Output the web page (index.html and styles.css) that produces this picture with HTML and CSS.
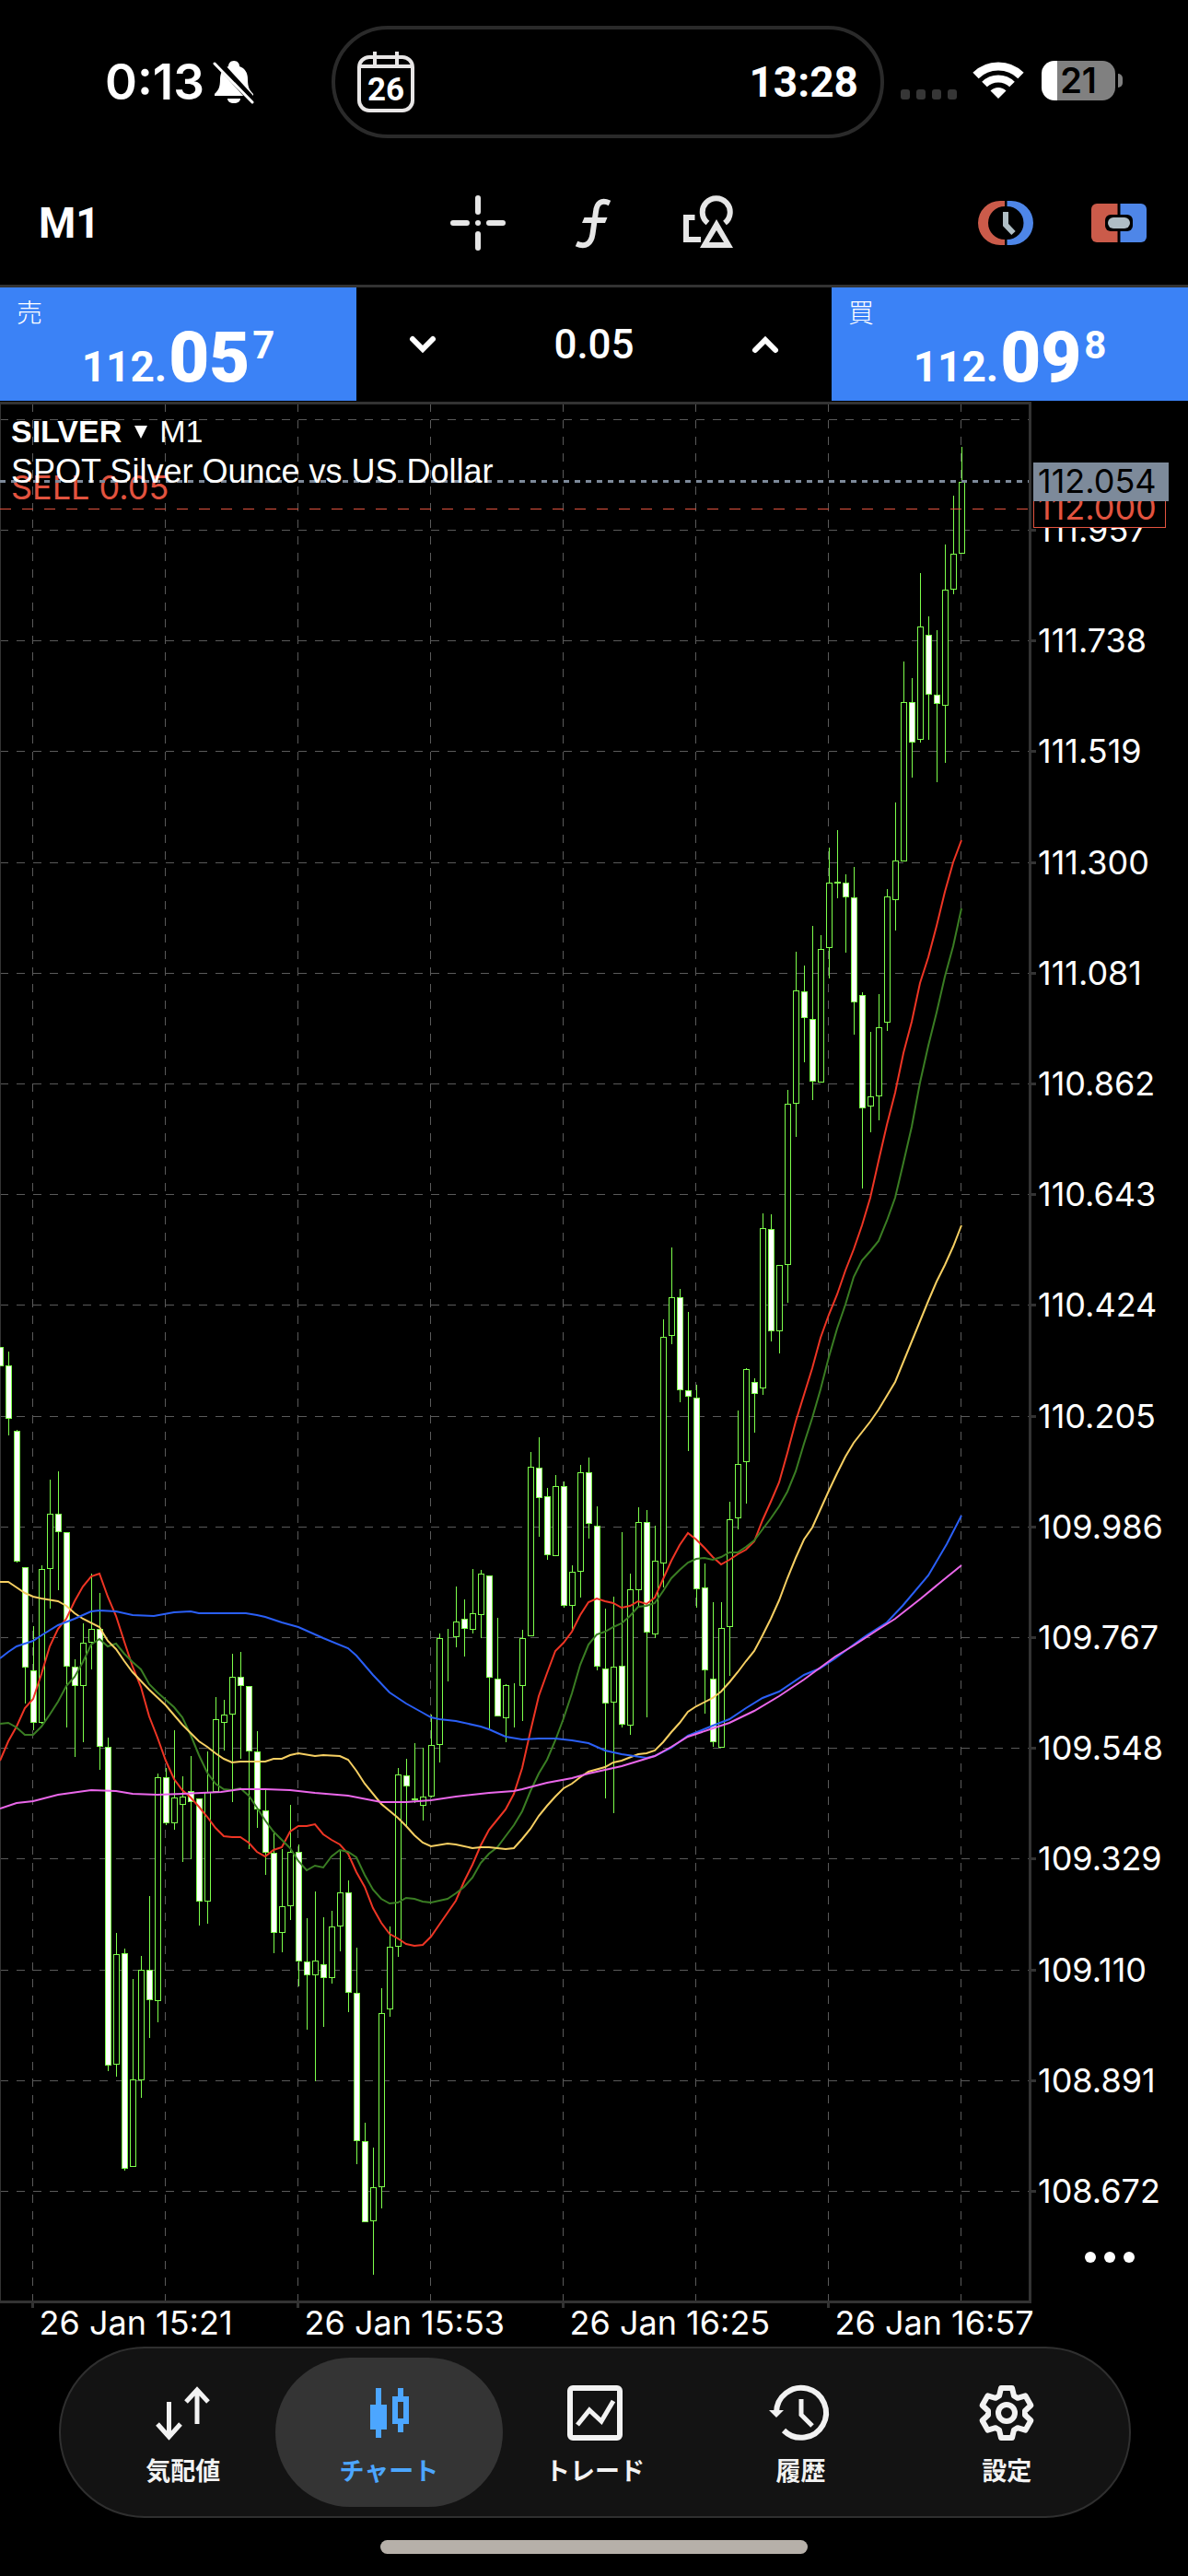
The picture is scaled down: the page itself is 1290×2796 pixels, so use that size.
FILE: index.html
```html
<!doctype html>
<html lang="ja">
<head>
  <meta charset="UTF-8">
  <meta name="viewport" content="width=device-width">
  <title>SILVER M1</title>
  <link rel="stylesheet" href="styles.css">
</head>
<body>
  <div class="status">
    <div class="status-left">
      <span class="clock">0:13</span>
      <svg class="bell" viewBox="0 0 44 48">
        <path d="M22 1c4 0 6 3 6 6 6 2 9 7 9 14 0 9 2 12 6 16v2H1v-2c4-4 6-7 6-16 0-7 3-12 9-14 0-3 2-6 6-6z" fill="#fff"/>
        <path d="M15 42h14c0 3-3 5-7 5s-7-2-7-5z" fill="#fff"/>
        <path d="M2 0L44 46" stroke="#000" stroke-width="8"/>
        <path d="M1 4L42 46" stroke="#fff" stroke-width="3" stroke-linecap="round"/>
      </svg>
    </div>
    <div class="island">
      <svg class="calendar" viewBox="0 0 62 68">
        <rect x="2" y="7" width="58" height="58" rx="11" fill="none" stroke="#e8e6e6" stroke-width="4"/>
        <path d="M3 17H59M19 1V15M43 1V15" stroke="#e8e6e6" stroke-width="4" fill="none"/>
        <text x="31" y="54" text-anchor="middle">26</text>
      </svg>
      <span class="timer">13:28</span>
    </div>
    <div class="status-right">
      <span class="signal"><i></i><i></i><i></i><i></i></span>
      <svg class="wifi" viewBox="0 0 54 41">
        <path d="M2.500 15A35 35 0 0 1 51.500 15" stroke="#fff" stroke-width="9" fill="none"/>
        <path d="M12 24.500A21.500 21.500 0 0 1 42 24.500" stroke="#fff" stroke-width="8" fill="none"/>
        <path d="M27 40L18.500 31.500A12 12 0 0 1 35.500 31.500z" fill="#fff"/>
      </svg>
      <span class="battery">21</span>
    </div>
  </div>

  <div class="toolbar">
    <button class="period">M1</button>
    <div class="tools">
      <button aria-label="十字線">
        <svg viewBox="0 0 60 60"><path d="M3 30H18M42 30H57M30 3V18M30 42V57M30 30h.01" stroke="#e6e6e6" stroke-width="6" stroke-linecap="round"/></svg>
      </button>
      <button aria-label="インディケータ">
        <svg viewBox="0 0 60 60">
          <path d="M48 8.500C39 4.500 34 8 33 18L29.500 42C28 52 22 57 12 52.500" stroke="#e6e6e6" stroke-width="6" fill="none"/>
          <path d="M20.500 24H45.500L43 30H18z" fill="#e6e6e6"/>
        </svg>
      </button>
      <button aria-label="オブジェクト">
        <svg viewBox="0 0 60 60">
          <path d="M15.500 24H6V48H22M29.500 30A15 15 0 1 1 48 30" stroke="#e6e6e6" stroke-width="6" fill="none"/>
          <path d="M39 26L57 57H21zM39 38L31 51H47z" fill="#e6e6e6" fill-rule="evenodd"/>
        </svg>
      </button>
    </div>
    <div class="tools tools-right">
      <button aria-label="注文">
        <svg viewBox="0 0 60 60">
          <path d="M29 6H24A24 24 0 0 0 24 54H29V48A18 18 0 0 1 29 12z" fill="#cb5b4a"/>
          <path d="M31.500 6H36A24 24 0 0 1 36 54H31.500V48A18 18 0 0 0 31.500 12z" fill="#4e86e8"/>
          <path d="M30 18V32L38.500 41" stroke="#b0bec5" stroke-width="6" fill="none"/>
        </svg>
      </button>
      <button aria-label="ワンクリック">
        <svg viewBox="0 0 60 60">
          <path d="M28.500 9H6a6 6 0 0 0-6 6V45a6 6 0 0 0 6 6H28.500z" fill="#cb5b4a"/>
          <path d="M31.500 9H54a6 6 0 0 1 6 6V45a6 6 0 0 1-6 6H31.500z" fill="#4e86e8"/>
          <rect x="15" y="21" width="30" height="18" rx="6" fill="#000"/>
          <rect x="18" y="24" width="24" height="12" rx="6" fill="#b0bec5"/>
        </svg>
      </button>
    </div>
  </div>

  <div class="trade">
    <button class="quote">
      <span class="side">売</span>
      <span class="price">112.<b>05</b><sup>7</sup></span>
    </button>
    <div class="volume">
      <button aria-label="減らす"><svg viewBox="0 0 28 18"><path d="M3 3L14 14L25 3"/></svg></button>
      <input type="text" value="0.05" aria-label="数量">
      <button aria-label="増やす"><svg viewBox="0 0 28 18"><path d="M3 15L14 4L25 15"/></svg></button>
    </div>
    <button class="quote">
      <span class="side">買</span>
      <span class="price">112.<b>09</b><sup>8</sup></span>
    </button>
  </div>

  <div class="chart">
    <svg id="chart" viewBox="0 436 1290 2108"></svg>
    <div class="chart-title">
      <button><b>SILVER</b> <i></i> M1</button>
      <p>SPOT Silver Ounce vs US Dollar</p>
    </div>
    <button class="more" aria-label="その他"><i></i><i></i><i></i></button>
  </div>

  <nav class="tabs">
    <a href="#quotes">
      <svg viewBox="0 0 60 60"><path d="M14.500 18V55M2 42L14.500 56L27 42M45 42V5M33 18L45 5L57 18" stroke="currentColor" stroke-width="5" fill="none"/></svg>
      <span>気配値</span>
    </a>
    <a href="#chart" class="on">
      <svg viewBox="0 0 60 60"><path d="M16 3h6v18h6v27h-6v9h-6v-9h-6V21h6zM40 3h6v9h6v30h-6v9h-6v-9h-6V12h6zM40 18v18h6V18z" fill="currentColor" fill-rule="evenodd"/></svg>
      <span>チャート</span>
    </a>
    <a href="#trade">
      <svg viewBox="0 0 60 60">
        <rect x="3" y="3" width="54" height="54" rx="3" stroke="currentColor" stroke-width="6" fill="none"/>
        <path d="M11 43L24 27L37 39L50 17" stroke="currentColor" stroke-width="5" fill="none"/>
      </svg>
      <span>トレード</span>
    </a>
    <a href="#history">
      <svg viewBox="0 0 60 60">
        <path d="M3 30A27 27 0 1 1 11 49" stroke="currentColor" stroke-width="6" fill="none"/>
        <path d="M-5 27H11L3 35z" fill="currentColor"/>
        <path d="M30 15V32L42 44" stroke="currentColor" stroke-width="5" fill="none"/>
      </svg>
      <span>履歴</span>
    </a>
    <a href="#settings">
      <svg viewBox="-30 -30 60 60">
        <path d="M-8-18.500L-6-27L6-27L8-18.500L12-16.200L20.400-18.700L26.400-8.300L20-2.300L20 2.300L26.400 8.300L20.400 18.700L12 16.200L8 18.500L6 27L-6 27L-8 18.500L-12 16.200L-20.400 18.700L-26.400 8.300L-20 2.300L-20-2.300L-26.400-8.300L-20.400-18.700L-12-16.200z" stroke="currentColor" stroke-width="6" stroke-linejoin="round" fill="none"/>
        <circle r="9" stroke="currentColor" stroke-width="6" fill="none"/>
      </svg>
      <span>設定</span>
    </a>
  </nav>
  <div class="home-bar"></div>
  <script src="chart.js"></script>
</body>
</html>
```
FILE: styles.css
```css
*{margin:0;
  padding:0;
  box-sizing:border-box;}
body{background:#000;
     color:#fff;
     font-family:Inter,"Noto Sans CJK JP",sans-serif;}
button,input{background:none;
             border:0;
             color:inherit;
             font:inherit;}
button{cursor:pointer;}
svg{display:block;overflow:visible;}
i{font-style:normal;}

/* status bar */
.status{display:grid;
        grid-template-columns:36fr 60fr 33fr;
        height:150px;
        padding-top:28px;}
.status-left{display:flex;
             align-items:center;
             padding:0 0 1px 114px;}
.clock{font-size:53px;
       font-weight:600;}
.bell{width:44px;
      height:48px;
      margin-left:10px;}
.island{display:flex;
        align-items:center;
        justify-content:space-between;
        height:122px;
        padding:0 24px;
        border:4px solid #2a2a2a;
        border-radius:61px;}
.calendar{width:62px;height:68px;}
.calendar text{fill:#fff;
               font:bold 35px Roboto,sans-serif;}
.timer{font:bold 46px Roboto,sans-serif;}
.status-right{display:flex;
              align-items:center;
              padding:0 0 4px 18px;}
.signal{display:flex;
        gap:7px;
        padding-top:30px;}
.signal i{width:10px;
          height:11px;
          border-radius:3px;
          background:#363636;}
.wifi{width:54px;
      height:41px;
      margin:0 20px 0 18px;}
.battery{position:relative;
         width:80px;
         height:43px;
         border-radius:14px;
         background:linear-gradient(90deg,#fff 17px,#808080 17px);
         color:#000;
         font-size:38px;
         font-weight:600;
         line-height:43px;
         text-align:center;}
.battery:after{content:"";
               position:absolute;
               right:-8px;
               top:14px;
               width:5px;
               height:15px;
               border-radius:0 8px 8px 0;
               background:#808080;}

/* toolbar */
.toolbar{display:grid;
         grid-template-columns:1fr auto 1fr;
         align-items:center;
         height:162px;
         padding:24px 45px 0 42px;
         border-bottom:3px solid #333;}
.period{justify-self:start;
        font:bold 46px Roboto,sans-serif;}
.tools{display:flex;gap:65px;}
.tools-right{justify-self:end;gap:63px;}
.tools svg{width:60px;height:60px;}

/* one click trading */
.trade{display:grid;
       grid-template-columns:3fr 4fr 3fr;
       grid-template-rows:123px;
       padding-bottom:1px;}
.quote{display:flex;
       flex-direction:column;
       align-items:center;
       background:#3b82f6;}
.side{align-self:flex-start;
      height:36px;
      padding:8px 18px 0;
      font:300 28px/36px "Noto Sans CJK JP",sans-serif;}
.price{display:flex;
       align-items:baseline;
       height:80px;
       font:bold 46px/80px Roboto,sans-serif;}
.price b{font-size:76px;
         margin-left:2px;}
.price sup{align-self:flex-start;
           margin-left:3px;
           font-size:42px;
           line-height:54px;}
.volume{display:flex;
        align-items:center;
        justify-content:space-between;
        padding:0 58px;}
.volume input{width:200px;
              text-align:center;
              font:500 44px Roboto,sans-serif;}
.volume svg{width:28px;height:18px;}
.volume path{fill:none;
             stroke:#fff;
             stroke-width:6;
             stroke-linecap:round;}

/* chart */
.chart{position:relative;}
.chart-title{position:absolute;
             left:12px;
             top:10px;
             font:36px/44px "Liberation Sans",Arial,sans-serif;}
.chart-title button{display:block;
                    font-size:34px;}
.chart-title i{display:inline-block;
               margin:0 4px;
               border:7px solid transparent;
               border-top:14px solid #fff;
               border-bottom:0;
               vertical-align:4px;}
.more{position:absolute;
      right:58px;
      bottom:88px;
      display:flex;
      gap:9px;}
.more i{width:12px;
        height:12px;
        border-radius:50%;
        background:#fff;}
.frame{fill:#333;}
.grid{stroke:#5a5a5a;
      shape-rendering:crispEdges;}
.grid-x{stroke-dasharray:9 9;}
.label{fill:#fff;
       font:36px Inter,sans-serif;}
.candles{fill:#000;
         stroke:#7dff4b;
         shape-rendering:crispEdges;}
.candles .down{fill:#fff;}
.ma{fill:none;
    stroke-width:2;}
.bid-line{stroke:#7d8a9a;
          stroke-width:3;
          stroke-dasharray:6 6;}
.order-line{stroke:#e2533f;
            stroke-dasharray:12 12;
            shape-rendering:crispEdges;}
.order-box{fill:#000;
           stroke:#e2533f;}
.order-text{fill:#e2533f;}
.bid-box{fill:#7d8a9a;}
.bid-text{fill:#000;}

/* bottom tabs */
.tabs{display:flex;
      margin:3px 62px 0 64px;
      padding:10px 21px;
      border:2px solid #2f2f2f;
      border-radius:93px;
      background:#131313;}
.tabs a{position:relative;
        z-index:1;
        flex:1;
        display:flex;
        flex-direction:column;
        align-items:center;
        gap:12px;
        height:162px;
        padding-top:30px;
        color:#f2f2f2;
        font:bold 27px/40px "Noto Sans CJK JP",sans-serif;
        text-decoration:none;}
.tabs .on{color:#4ca6ff;}
.tabs .on:before{content:"";
                 position:absolute;
                 z-index:-1;
                 top:0;
                 bottom:0;
                 left:-12px;
                 right:-12px;
                 border-radius:81px;
                 background:#343434;}
.tabs svg{width:60px;height:60px;}
.home-bar{width:36%;
          height:15px;
          margin:24px auto;
          border-radius:8px;
          background:#b6b0a9;}
```
FILE: chart.js
```js
window.onload=function(){
  var svg=document.getElementById('chart'),
      step=9,
      // high, body top, body bottom, low, 1 = falling
      candles=[
        [1467,1482,1540,1558,1],[1552,1553,1695,1696,1],[1701,1701,1810,1849,1],[1765,1813,1870,1878,1],
        [1699,1703,1870,1871,0],[1606,1643,1703,1746,0],[1597,1643,1663,1726,1],[1663,1663,1809,1875,1],
        [1801,1809,1830,1907,1],[1762,1783,1830,1891,0],[1708,1768,1783,1812,0],[1729,1768,1896,1921,1],
        [1886,1896,2242,2248,1],[2098,2121,2241,2254,0],[2115,2120,2354,2356,1],[2148,2257,2352,2352,0],
        [2123,2138,2258,2277,0],[2058,2138,2171,2212,1],[1925,1929,2172,2195,0],[1919,1929,1979,1981,1],
        [1878,1951,1979,1986,0],[1928,1950,1959,2021,0],[1906,1944,1956,2018,1],[1952,1952,2064,2090,1],
        [1901,1945,2064,2088,0],[1842,1866,1945,1945,0],[1845,1861,1870,1900,0],[1795,1820,1861,1956,0],
        [1793,1820,1830,1909,1],[1830,1830,1901,2007,1],[1879,1901,1964,1984,1],[1943,1965,2011,2035,1],
        [1990,2011,2098,2120,1],[2007,2069,2098,2119,0],[1959,2010,2069,2084,0],[2002,2010,2129,2156,1],
        [2082,2129,2144,2203,1],[2053,2128,2144,2259,0],[2081,2132,2147,2200,1],[2074,2091,2147,2153,0],
        [2009,2054,2091,2118,0],[2041,2054,2163,2184,1],[2114,2163,2324,2349,1],[2304,2324,2412,2412,1],
        [2331,2374,2411,2469,0],[2158,2185,2374,2397,0],[2091,2113,2181,2189,0],[1919,1926,2113,2124,0],
        [1909,1927,1939,1983,1],[1892,1952,1954,1957,1],[1897,1950,1960,1976,0],[1861,1894,1950,1951,0],
        [1773,1778,1894,1913,0],[1768,1777,1777,1825,0],[1722,1760,1777,1788,0],[1736,1757,1768,1798,1],
        [1703,1751,1769,1773,0],[1704,1708,1753,1778,0],[1710,1710,1821,1876,1],[1756,1822,1863,1863,1],
        [1828,1829,1865,1891,0],[1827,1829,1829,1875,0],[1769,1778,1830,1868,0],[1576,1592,1776,1776,0],
        [1560,1593,1626,1668,1],[1615,1624,1688,1693,1],[1601,1613,1689,1689,0],[1608,1613,1743,1745,1],
        [1699,1706,1743,1769,0],[1590,1598,1706,1734,0],[1582,1598,1654,1670,1],[1635,1656,1809,1813,1],
        [1746,1811,1849,1952,1],[1733,1809,1848,1968,0],[1663,1808,1872,1875,1],[1708,1725,1873,1883,0],
        [1636,1652,1726,1744,0],[1639,1652,1772,1864,1],[1656,1694,1774,1778,0],[1432,1451,1697,1723,0],
        [1354,1408,1450,1459,0],[1399,1408,1509,1522,1],[1424,1509,1516,1575,1],[1503,1517,1725,1745,1],
        [1697,1723,1813,1860,1],[1739,1822,1891,1896,1],[1739,1767,1897,1897,0],[1630,1649,1766,1819,0],
        [1531,1589,1648,1660,0],[1485,1486,1587,1632,0],[1496,1500,1513,1555,1],[1317,1333,1507,1514,0],
        [1318,1334,1445,1456,1],[1373,1373,1445,1469,0],[1183,1198,1373,1414,0],[1033,1075,1198,1234,0],
        [1048,1076,1105,1153,1],[1005,1106,1174,1194,1],[1015,1030,1175,1175,0],[920,958,1029,1062,0],
        [901,957,959,975,0],[949,958,974,1034,1],[941,974,1088,1123,1],[1077,1080,1203,1290,1],
        [1120,1190,1201,1229,0],[1079,1115,1190,1216,0],[965,973,1110,1119,0],[871,934,977,1010,0],
        [718,762,935,935,0],[736,762,806,844,1],[622,680,803,806,0],[669,689,754,803,1],
        [684,754,764,849,1],[591,640,766,828,0],[538,601,640,645,0],[485,523,601,601,0]
      ],
      // one value for each bar
      fast=[1911,1890,1874,1854,1844,1817,1787,1768,1757,1738,1722,1711,1708,1733,1754,1782,1809,1831,1863,1886,
        1911,1931,1943,1951,1961,1972,1984,1993,1994,1994,2000,2010,2015,2008,2005,1988,1982,1982,1980,1991,
        1997,2002,2012,2032,2048,2071,2087,2099,2104,2110,2112,2111,2102,2089,2076,2063,2042,2024,2003,1986,
        1975,1964,1947,1919,1879,1841,1816,1792,1783,1771,1753,1739,1735,1738,1740,1745,1743,1738,1741,1734,
        1714,1694,1677,1664,1671,1680,1690,1698,1693,1687,1682,1673,1650,1630,1609,1577,1543,1514,1485,1452,
        1427,1405,1379,1356,1330,1300,1260,1221,1186,1143,1109,1067,1039,1005,968,936,912],
      slow=[1871,1870,1875,1883,1883,1874,1861,1847,1830,1820,1804,1785,1779,1787,1784,1795,1804,1812,1828,1837,
        1845,1853,1864,1883,1905,1924,1936,1942,1943,1941,1949,1962,1976,1988,1997,2006,2020,2030,2025,2027,
        2015,2008,2010,2016,2035,2051,2061,2066,2065,2060,2061,2064,2065,2063,2061,2055,2048,2038,2022,2012,
        2005,1993,1981,1966,1944,1925,1910,1889,1865,1838,1807,1785,1774,1771,1766,1762,1754,1744,1743,1740,
        1727,1713,1704,1696,1692,1691,1693,1690,1685,1685,1679,1672,1660,1648,1635,1619,1597,1567,1539,1508,
        1473,1442,1416,1386,1368,1358,1347,1325,1300,1262,1223,1175,1135,1099,1060,1027,986],
      yellow='0,1717 9,1717 18,1723 27,1729 36,1733 45,1735 63,1738 72,1743 81,1751 90,1757 108,1766 117,1781 126,1790 135,1803 144,1815 162,1834 180,1851 198,1872 216,1890 225,1896 234,1903 243,1909 252,1913 261,1912 288,1912 297,1909 306,1909 315,1905 324,1903 342,1906 351,1905 369,1906 378,1910 387,1922 396,1936 414,1958 432,1973 441,1982 450,1992 459,2000 468,2004 486,2001 495,2002 513,2006 522,2005 531,2005 549,2007 558,2006 567,1996 576,1985 585,1971 594,1960 603,1950 612,1941 621,1936 630,1929 639,1923 657,1918 666,1913 675,1911 693,1904 702,1903 711,1900 720,1891 729,1880 738,1870 747,1858 756,1852 774,1843 783,1836 792,1826 801,1815 810,1803 819,1792 828,1775 837,1757 846,1737 855,1713 864,1691 873,1671 882,1658 891,1638 900,1618 909,1599 918,1581 927,1566 945,1543 954,1530 972,1500 990,1456 1008,1412 1017,1391 1026,1373 1035,1353 1044,1330',
      blue='0,1800 9,1793 18,1787 36,1781 45,1775 63,1764 81,1757 99,1749 108,1748 126,1749 144,1753 167,1754 189,1750 207,1749 216,1751 267,1751 279,1753 288,1755 306,1761 324,1766 351,1778 378,1789 387,1797 405,1818 423,1837 441,1849 459,1859 468,1864 477,1866 495,1868 522,1874 531,1877 549,1885 567,1888 585,1887 603,1887 621,1889 639,1892 657,1900 675,1904 702,1908 711,1906 729,1897 747,1884 774,1873 792,1866 810,1854 828,1843 846,1836 873,1818 890,1811 907,1800 927,1785 941,1775 963,1761 980,1743 1008,1710 1028,1676 1044,1645',
      pink='0,1963 18,1957 36,1955 63,1948 99,1943 126,1944 144,1947 171,1948 198,1947 240,1945 261,1942 288,1942 315,1943 342,1946 378,1949 414,1956 441,1956 468,1954 495,1950 531,1946 558,1944 567,1942 594,1935 621,1930 639,1925 657,1921 675,1917 711,1906 729,1896 747,1885 774,1876 792,1870 819,1857 846,1841 873,1823 907,1798 927,1786 953,1769 972,1757 1000,1735 1023,1716 1044,1699',
      times=['15:21','15:53','16:25','16:57'],
      html='',i,y,x;

  function line(cls,x1,y1,x2,y2){
    return '<line class="'+cls+'" x1="'+x1+'" y1="'+y1+'" x2="'+x2+'" y2="'+y2+'"/>';
  }
  function rect(cls,x,y,w,h){
    return '<rect class="'+cls+'" x="'+x+'" y="'+y+'" width="'+w+'" height="'+h+'"/>';
  }
  function text(cls,x,y,s){
    return '<text class="'+cls+'" x="'+x+'" y="'+y+'">'+s+'</text>';
  }
  function ma(color,points){
    return '<polyline class="ma" stroke="'+color+'" points="'+points+'"/>';
  }
  function bars(values){
    return values.map(function(v,n){ return n*step+','+v; }).join(' ');
  }

  // grid
  for(i=-1;i<16;i++){
    y=Math.round(575+i*120.2)+0.5;
    html+=line('grid grid-x',0,y,1117,y);
    if(i>=0){
      html+=rect('frame',1117,y-1.5,8,3);
      html+=text('label',1127,y+12,(111.957-i*0.219).toFixed(3));
    }
  }
  for(i=0;i<8;i++){
    x=35.5+i*144;
    html+=line('grid grid-x',x,438,x,2497);
    if(i%2==0){
      html+=rect('frame',x-1.5,2497,3,8);
      html+=text('label',x+7,2534,'26 Jan '+times[i/2]);
    }
  }
  html+=rect('frame',0,436,1120,3)+rect('frame',1117,436,3,2064)+
        rect('frame',0,2497,1120,3)+rect('frame',0,436,1,2064);

  // candles
  html+='<g class="candles"><path class="down" d="M0 1462.5H3.500V1482.500H0"/>';
  for(i=0;i<candles.length;i++){
    var c=candles[i];
    x=i*step+9.5;
    html+=line('',x,c[0],x,c[3]);
    html+=rect(c[4]?'down':'up',x-3,c[1]+0.5,6,Math.max(c[2]-c[1]-1,0));
  }
  html+='</g>';

  // moving averages
  html+=ma('#ee3524',bars(fast))+ma('#3a7d23',bars(slow))+
        ma('#f6cf62',yellow)+ma('#2a5ff6',blue)+ma('#ea67ea',pink);

  // open position and current price
  html+=line('order-line',0,552.5,1117,552.5)+text('label order-text',12,542,'SELL 0.05')+
        rect('order-box',1122.5,531.5,143,41)+text('label order-text',1127,564,'112.000');
  html+=line('bid-line',0,522.5,1117,522.5)+
        rect('bid-box',1122,502,147,42)+text('label bid-text',1127,535,'112.054');

  svg.innerHTML=html;
};
```
